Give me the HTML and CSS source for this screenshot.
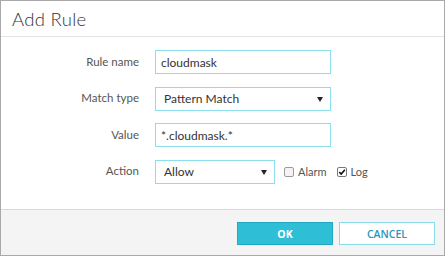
FILE: index.html
```html
<!DOCTYPE html>
<html>
<head>
<meta charset="utf-8">
<link rel="stylesheet" href="styles.css">
</head>
<body>
<div class="dialog">
  <div class="header"><h1 class="title">Add Rule</h1></div>
  <div class="body">
    <div class="form">
      <label class="label">Rule name</label>
      <div class="field"><input class="input" type="text" value="cloudmask"></div>
      <label class="label">Match type</label>
      <div class="field"><div class="select"><span>Pattern Match</span><span class="caret"></span></div></div>
      <label class="label">Value</label>
      <div class="field"><input class="input" type="text" value="*.cloudmask.*"></div>
      <label class="label">Action</label>
      <div class="field action-row">
        <div class="select small"><span>Allow</span><span class="caret"></span></div>
        <span class="check"><span class="box"></span>Alarm</span>
        <span class="check"><span class="box checked"><svg viewBox="0 0 10 10" width="8" height="8"><path d="M1.6 5.2 L4 7.6 L8.6 2.2" fill="none" stroke="#111" stroke-width="2"/></svg></span>Log</span>
      </div>
    </div>
  </div>
  <div class="footer">
    <button class="btn btn-ok">OK</button>
    <button class="btn btn-cancel">CANCEL</button>
  </div>
</div>
</body>
</html>
```
FILE: styles.css
```css
* { box-sizing: border-box; }
html, body { margin: 0; padding: 0; background: #fff; }
.dialog {
  width: 445px;
  height: 256px;
  border: 1px solid #a9a9a9;
  display: flex;
  flex-direction: column;
  font-family: Lato, "Open Sans", sans-serif;
  background: #fff;
}
.header {
  height: 36px;
  border-bottom: 1px solid #e4e4e4;
  padding-left: 11px;
  display: flex;
  align-items: center;
}
.title {
  margin: 0;
  font-family: Lato, "Open Sans", sans-serif;
  font-weight: 300;
  font-size: 18.5px;
  color: #333;
  letter-spacing: 0.3px;
  padding-top: 1px;
}
.body {
  flex: 1;
  padding-top: 13px;
}
.form {
  display: grid;
  grid-template-columns: 138px 176px;
  grid-auto-rows: 24px;
  column-gap: 16px;
  row-gap: 12.67px;
}
.label {
  text-align: right;
  font-size: 11.5px;
  color: #555;
  align-self: center;
  padding-bottom: 2px;
}
.field { display: flex; align-items: center; }
.input {
  width: 176px;
  height: 24px;
  border: 1px solid #8cdeec;
  padding: 0 0 0 5px;
  font-family: Lato, "Open Sans", sans-serif;
  font-size: 12px;
  color: #333;
  outline: none;
  background: #fff;
}
.select {
  width: 176px;
  height: 24px;
  border: 1px solid #8cdeec;
  padding: 0 7px 0 8px;
  display: flex;
  align-items: center;
  justify-content: space-between;
  font-size: 12px;
  color: #333;
  background: #fff;
  flex: none;
}
.select.small { width: 120px; }
.caret {
  width: 0;
  height: 0;
  border-left: 3px solid transparent;
  border-right: 3px solid transparent;
  border-top: 5px solid #222;
  margin-top: 1px;
}
.action-row { gap: 0; }
.check {
  display: flex;
  align-items: center;
  font-size: 11px;
  color: #555;
  margin-left: 9px;
}
.check + .check { margin-left: 10px; }
.box {
  width: 10px;
  height: 10px;
  border: 1px solid #9a9a9a;
  border-radius: 2px;
  background: #f4f4f4;
  margin-right: 4px;
  display: flex;
  align-items: center;
  justify-content: center;
}
.box.checked { background: #fff; border-color: #777; }
.box svg { display: block; }
.footer {
  height: 46px;
  border-top: 1px solid #dadada;
  background: #f4f4f4;
  display: flex;
  justify-content: flex-end;
  align-items: flex-start;
  padding: 12px 9px 0 0;
  gap: 6px;
}
.btn {
  width: 96px;
  height: 23px;
  font-family: "Open Sans", "Liberation Sans", sans-serif;
  font-size: 10.5px;
  font-weight: 700;
  cursor: pointer;
  padding: 0;
}
.btn-ok {
  background: #2ebfd7;
  border: 1px solid #1fa9c3;
  color: #fff;
}
.btn-cancel {
  background: #fff;
  border: 1px solid #8adbea;
  color: #2298bd;
  font-weight: 600;
  letter-spacing: 0;
}
```
